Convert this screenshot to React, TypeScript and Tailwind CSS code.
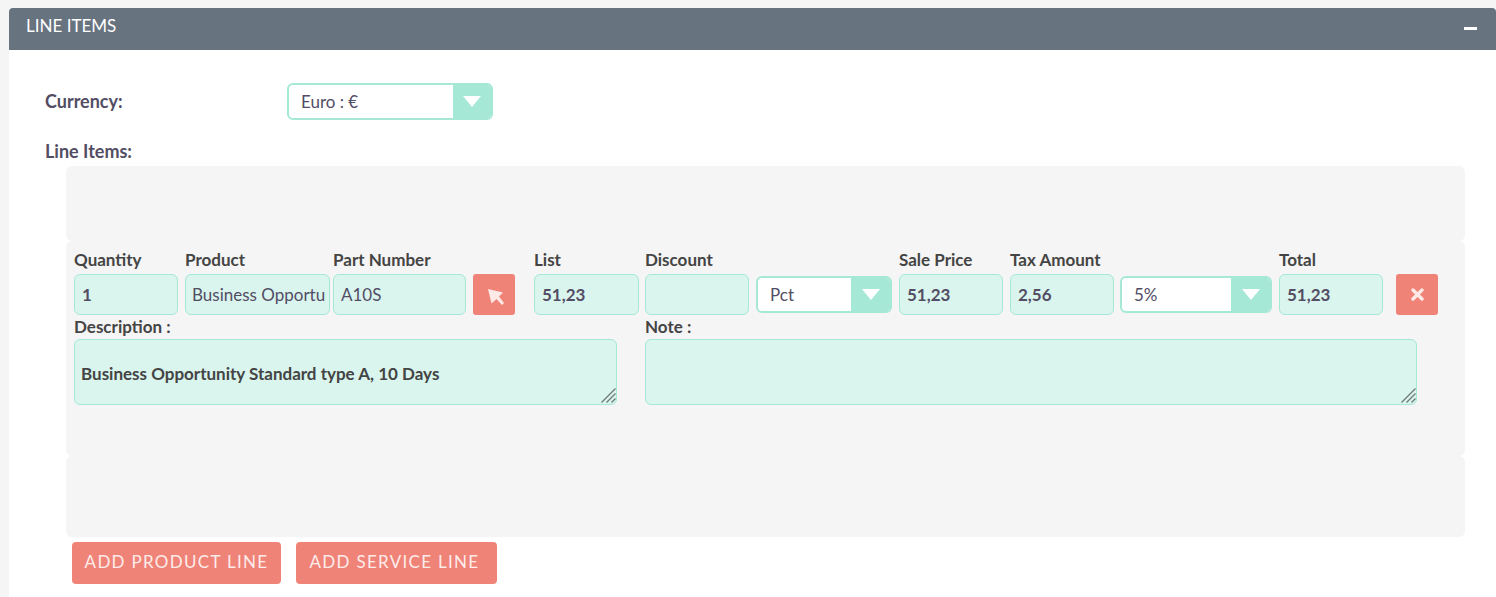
import React from "react";

const Arrow = () => (
  <svg width="18" height="11" viewBox="0 0 18 11"><polygon points="0,0 18,0 9,11" fill="#ffffff" /></svg>
);

const Field = ({ label, value, w, ml, bold = true, pad = "pl-[7px]" }: { label: string; value: string; w: string; ml: string; bold?: boolean; pad?: string }) => (
  <div className={`flex flex-col shrink-0 ${w} ${ml}`}>
    <div className="h-[27px] text-[17px] font-bold leading-[26px] text-[#444444] whitespace-nowrap">{label}</div>
    <input
      readOnly
      value={value}
      className={`h-[41px] w-full rounded-[6px] border border-[#a5e8d6] bg-[#d9f5ee] ${pad} pr-[3px] text-[17px] text-[#534d64] outline-none ${bold ? "font-bold" : "font-normal"}`}
    />
  </div>
);

const Select = ({ value, w, ml, arrowW }: { value: string; w: string; ml: string; arrowW: string }) => (
  <div className={`mt-[29px] flex shrink-0 self-start ${w} ${ml} h-[37px] overflow-hidden rounded-[6px] border-2 border-[#a5e8d6] bg-white`}>
    <div className="flex flex-1 items-center pl-[12px] text-[17px] text-[#534d64]">{value}</div>
    <div className={`flex ${arrowW} items-center justify-center bg-[#a5e8d6]`}>
      <Arrow />
    </div>
  </div>
);

const Notes = ({ label, value, w, ml }: { label: string; value: string; w: string; ml: string }) => (
  <div className={`flex shrink-0 flex-col ${w} ${ml}`}>
    <div className="h-[24px] text-[17px] font-bold leading-[24px] text-[#444444]">{label}</div>
    <div className="relative h-[66px]">
      <textarea
        readOnly
        defaultValue={value}
        className="block h-[66px] w-full resize-none rounded-[6px] border border-[#a5e8d6] bg-[#d9f5ee] pl-[6px] pr-[3px] pt-[22px] text-[17px] font-bold leading-[24px] text-[#444444] outline-none"
      />
      <svg className="absolute bottom-[2px] right-[1px]" width="15" height="15" viewBox="0 0 15 15">
        <path d="M0.5 14.5 L14.5 0.5 M5.5 14.5 L14.5 5.5 M10.5 14.5 L14.5 10.5" stroke="#6f7775" strokeWidth="1.3" fill="none" />
      </svg>
    </div>
  </div>
);

export default function App() {
  return (
    <div className="h-[597px] overflow-hidden bg-[#f5f5f5] pl-[9px] pt-[8px] font-['Lato','Liberation_Sans',sans-serif]">
      <div className="h-[589px] bg-white">
        <div className="flex h-[42px] items-start justify-between rounded-t-[4px] bg-[#67737f] pl-[17px] pr-[19px]">
          <span className="mt-[6px] text-[17px] leading-[24px] text-white">LINE ITEMS</span>
          <span className="mt-[19px] h-[3px] w-[13px] bg-white" />
        </div>

        <div className="flex items-start pl-[36px] pt-[33px]">
          <label className="mt-[6px] w-[242px] text-[18px] font-bold leading-[24px] text-[#534d64]">Currency:</label>
          <div className="flex h-[37px] w-[206px] overflow-hidden rounded-[6px] border-2 border-[#a5e8d6] bg-white">
            <div className="flex flex-1 items-center pl-[12px] pt-[1px] text-[17px] text-[#534d64]">Euro : €</div>
            <div className="flex w-[38px] items-center justify-center bg-[#a5e8d6]">
              <Arrow />
            </div>
          </div>
        </div>

        <div className="pl-[36px] pt-[19px] text-[18px] font-bold leading-[24px] text-[#534d64]">Line Items:</div>

        <div className="ml-[57px] mt-[3px] flex w-[1399px] flex-col">
          <div className="h-[75px] rounded-[6px] bg-[#f5f5f5]" />
          <div className="h-[215px] rounded-[6px] bg-[#f5f5f5] pl-[8px] pt-[6px]">
            <div className="flex">
              <Field label="Quantity" value="1" w="w-[104px]" ml="ml-0" />
              <Field label="Product" value="Business Opportunity Standard" w="w-[145px]" ml="ml-[7px]" bold={false} pad="pl-[6px]" />
              <Field label="Part Number" value="A10S" w="w-[133px]" ml="ml-[3px]" bold={false} />
              <div className="ml-[7px] mt-[27px] flex h-[41px] w-[42px] shrink-0 items-center justify-center rounded-[3px] bg-[#f08377]">
                <svg className="ml-[4px] mt-[5px]" width="16" height="18" viewBox="0 0 16 18">
                  <path d="M0 1 L15 4.5 L11 8.5 L16 15 L14 17 L8.5 11 L3.5 15.5 Z" fill="#fde9e6" />
                </svg>
              </div>
              <Field label="List" value="51,23" w="w-[105px]" ml="ml-[19px]" />
              <Field label="Discount" value="" w="w-[104px]" ml="ml-[6px]" />
              <Select value="Pct" w="w-[136px]" ml="ml-[7px]" arrowW="w-[39px]" />
              <Field label="Sale Price" value="51,23" w="w-[104px]" ml="ml-[7px]" />
              <Field label="Tax Amount" value="2,56" w="w-[104px]" ml="ml-[7px]" />
              <Select value="5%" w="w-[152px]" ml="ml-[6px]" arrowW="w-[39px]" />
              <Field label="Total" value="51,23" w="w-[104px]" ml="ml-[7px]" />
              <div className="ml-[13px] mt-[27px] flex h-[41px] w-[42px] shrink-0 items-center justify-center rounded-[3px] bg-[#f08377]">
                <svg width="13" height="13" viewBox="0 0 13 13">
                  <path d="M2 2 L11 11 M11 2 L2 11" stroke="#fde9e6" strokeWidth="3.4" strokeLinecap="round" />
                </svg>
              </div>
            </div>
            <div className="flex">
              <Notes label="Description :" value="Business Opportunity Standard type A, 10 Days" w="w-[543px]" ml="ml-0" />
              <Notes label="Note :" value="" w="w-[772px]" ml="ml-[28px]" />
            </div>
          </div>
          <div className="h-[81px] rounded-[6px] bg-[#f5f5f5]" />
        </div>

        <div className="ml-[63px] mt-[5px] flex gap-[15px]">
          <button className="h-[42px] w-[209px] rounded-[4px] bg-[#f08377] pb-[2px] text-[17px] tracking-[1.3px] text-[#fdecea]">ADD PRODUCT LINE</button>
          <button className="h-[42px] w-[201px] rounded-[4px] bg-[#f08377] pb-[2px] pr-[4px] text-[17px] tracking-[1.3px] text-[#fdecea]">ADD SERVICE LINE</button>
        </div>
      </div>
    </div>
  );
}
